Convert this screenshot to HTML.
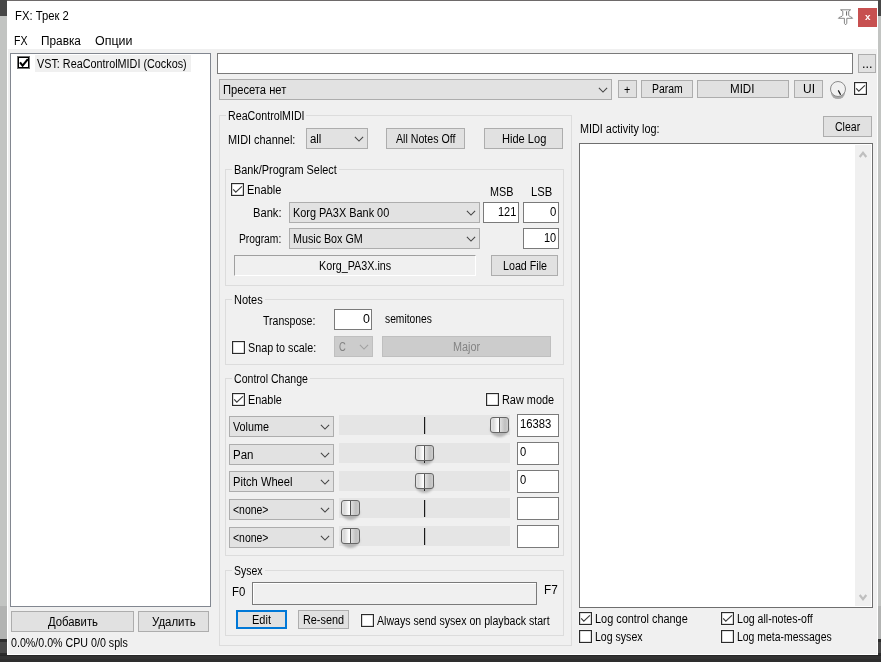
<!DOCTYPE html><html lang="ru"><head><meta charset="utf-8"><title>FX: Трек 2</title><style>
html,body{margin:0;padding:0;background:#2e2e2e;overflow:hidden;}
#r{position:relative;width:881px;height:662px;overflow:hidden;font-family:"Liberation Sans", sans-serif;font-size:12px;}
#r div,#r svg,#r span{position:absolute;}
#r span{white-space:nowrap;line-height:20px;height:20px;transform-origin:0 50%;}
</style></head><body><div id="r">
<div style="left:0px;top:0px;width:881px;height:662px;background:#2e2e2e;"></div>
<div style="left:0px;top:655px;width:881px;height:1px;background:#262626;"></div>
<div style="left:0px;top:656px;width:881px;height:3px;background:#333333;"></div>
<div style="left:0px;top:0px;width:7px;height:16px;background:#474747;"></div>
<div style="left:0px;top:16px;width:7px;height:590px;background:#c2c4c2;"></div>
<div style="left:0px;top:606px;width:7px;height:33px;background:#b2b3b2;"></div>
<div style="left:0px;top:639px;width:7px;height:3px;background:#2d2d2d;"></div>
<div style="left:0px;top:642px;width:7px;height:11px;background:#484848;"></div>
<div style="left:0px;top:653px;width:7px;height:2px;background:#2b2b2b;"></div>
<div style="left:878px;top:0px;width:3px;height:16px;background:#474747;"></div>
<div style="left:878px;top:16px;width:3px;height:590px;background:#c2c4c2;"></div>
<div style="left:878px;top:606px;width:3px;height:33px;background:#b2b3b2;"></div>
<div style="left:878px;top:639px;width:3px;height:3px;background:#2d2d2d;"></div>
<div style="left:878px;top:642px;width:3px;height:11px;background:#484848;"></div>
<div style="left:878px;top:653px;width:3px;height:2px;background:#2b2b2b;"></div>
<div style="left:7px;top:0px;width:871px;height:655px;background:#fff;"></div>
<div style="left:8px;top:0px;width:869px;height:654px;background:#f0f0f0;"></div>
<div style="left:8px;top:0px;width:869px;height:49px;background:#fff;"></div>
<div style="left:7px;top:0px;width:871px;height:1px;background:#6e6a6a;"></div>
<svg style="left:836px;top:7px" width="19" height="20" viewBox="0 0 19 20"><path d="M4.6,2.8 H14.6 L12.7,4.3 V8.3 C12.9,9.7 16.3,10 16.6,11.3 H10.8 V16.3 L9.6,17.8 L8.4,16.3 V11.3 H2.4 C2.7,10 6.6,9.7 6.8,8.3 V4.3 Z" fill="#fff" stroke="#707070" stroke-width="0.85" stroke-linejoin="round"/><line x1="10.6" y1="4.3" x2="10.6" y2="8.6" stroke="#555" stroke-width="0.9"/></svg>
<div style="left:858px;top:8px;width:19px;height:19px;background:#c75050;"></div>
<span style="left:864.7px;top:6.6px;color:#fff;font-weight:bold;font-size:9.5px;transform:scaleX(1.04);">x</span>
<div style="left:10px;top:53px;width:201px;height:554px;background:#fff;border:1px solid #828790;box-sizing:border-box;"></div>
<div style="left:35px;top:55px;width:156px;height:17px;background:#f0f0f0;"></div>
<div style="left:17px;top:56px;width:13px;height:13px;background:#fff;border:1px solid #707070;box-sizing:border-box;box-shadow:inset 0 0 0 1px #000;"></div>
<svg style="left:17px;top:56px" width="13" height="13" viewBox="0 0 13 13"><polyline points="3,6.4 5.6,9.6 10.9,3.1" fill="none" stroke="#000" stroke-width="2.1"/></svg>
<div style="left:11px;top:611px;width:123px;height:21px;background:#e1e1e1;border:1px solid #adadad;box-sizing:border-box;"></div>
<div style="left:138px;top:611px;width:71px;height:21px;background:#e1e1e1;border:1px solid #adadad;box-sizing:border-box;"></div>
<div style="left:217px;top:53px;width:636px;height:21px;background:#fff;border:1px solid #7a7a7a;box-sizing:border-box;"></div>
<div style="left:858px;top:54px;width:18px;height:19px;background:#e1e1e1;border:1px solid #adadad;box-sizing:border-box;"></div>
<div style="left:219px;top:79px;width:393px;height:21px;background:#e2e2e2;border:1px solid #adadad;box-sizing:border-box;"></div>
<svg style="left:598px;top:86.9px" width="10" height="6" viewBox="0 0 10 6"><polyline points="0.9,0.8 5,5 9.1,0.8" fill="none" stroke="#444" stroke-width="1.05"/></svg>
<div style="left:618px;top:80px;width:19px;height:18px;background:#e1e1e1;border:1px solid #adadad;box-sizing:border-box;"></div>
<div style="left:641px;top:80px;width:52px;height:18px;background:#e1e1e1;border:1px solid #adadad;box-sizing:border-box;"></div>
<div style="left:697px;top:80px;width:92px;height:18px;background:#e1e1e1;border:1px solid #adadad;box-sizing:border-box;"></div>
<div style="left:794px;top:80px;width:29px;height:18px;background:#e1e1e1;border:1px solid #adadad;box-sizing:border-box;"></div>
<div style="left:831px;top:86px;width:14px;height:12.6px;border-radius:50%;background:#a8a8a8;filter:blur(0.7px)"></div>
<div style="left:830px;top:80.8px;width:16px;height:16px;border-radius:50%;background:#f1f1f1;border:1px solid #8c8c8c;box-sizing:border-box"></div>
<svg style="left:830px;top:80.8px" width="16" height="16" viewBox="0 0 16 16"><line x1="8.3" y1="9.4" x2="10.6" y2="13.8" stroke="#111" stroke-width="1.2"/></svg>
<div style="left:854px;top:82px;width:13px;height:13px;background:#fff;border:1px solid #2b2b2b;box-sizing:border-box;box-shadow:0 0 0 0.5px rgba(255,255,255,.6),inset 0 0 0 0.3px #888;"></div>
<svg style="left:854px;top:82px" width="13" height="13" viewBox="0 0 13 13"><polyline points="2.2,6.3 4.8,9.2 10.9,3.3" fill="none" stroke="#3a3a3a" stroke-width="1.15"/></svg>
<div style="left:219px;top:115px;width:353px;height:531px;border:1px solid #dcdcdc;box-sizing:border-box;"></div>
<div style="left:226.25px;top:113px;width:79.75px;height:5px;background:#f0f0f0;"></div>
<div style="left:306px;top:128px;width:62px;height:21px;background:#e2e2e2;border:1px solid #adadad;box-sizing:border-box;"></div>
<svg style="left:354px;top:135.9px" width="10" height="6" viewBox="0 0 10 6"><polyline points="0.9,0.8 5,5 9.1,0.8" fill="none" stroke="#444" stroke-width="1.05"/></svg>
<div style="left:386px;top:128px;width:79px;height:21px;background:#e1e1e1;border:1px solid #adadad;box-sizing:border-box;"></div>
<div style="left:484px;top:128px;width:79px;height:21px;background:#e1e1e1;border:1px solid #adadad;box-sizing:border-box;"></div>
<div style="left:225px;top:169px;width:339px;height:117px;border:1px solid #dcdcdc;box-sizing:border-box;"></div>
<div style="left:232.1px;top:167px;width:106.9px;height:5px;background:#f0f0f0;"></div>
<div style="left:231px;top:183px;width:13px;height:13px;background:#fff;border:1px solid #2b2b2b;box-sizing:border-box;box-shadow:0 0 0 0.5px rgba(255,255,255,.6),inset 0 0 0 0.3px #888;"></div>
<svg style="left:231px;top:183px" width="13" height="13" viewBox="0 0 13 13"><polyline points="2.2,6.3 4.8,9.2 10.9,3.3" fill="none" stroke="#3a3a3a" stroke-width="1.15"/></svg>
<div style="left:289px;top:202px;width:191px;height:21px;background:#e2e2e2;border:1px solid #adadad;box-sizing:border-box;"></div>
<svg style="left:466px;top:209.9px" width="10" height="6" viewBox="0 0 10 6"><polyline points="0.9,0.8 5,5 9.1,0.8" fill="none" stroke="#444" stroke-width="1.05"/></svg>
<div style="left:483px;top:202px;width:36px;height:21px;background:#fff;border:1px solid #7a7a7a;box-sizing:border-box;"></div>
<div style="left:523px;top:202px;width:36px;height:21px;background:#fff;border:1px solid #7a7a7a;box-sizing:border-box;"></div>
<div style="left:289px;top:228px;width:191px;height:21px;background:#e2e2e2;border:1px solid #adadad;box-sizing:border-box;"></div>
<svg style="left:466px;top:235.9px" width="10" height="6" viewBox="0 0 10 6"><polyline points="0.9,0.8 5,5 9.1,0.8" fill="none" stroke="#444" stroke-width="1.05"/></svg>
<div style="left:523px;top:228px;width:36px;height:21px;background:#fff;border:1px solid #7a7a7a;box-sizing:border-box;"></div>
<div style="left:234px;top:255px;width:242px;height:21px;background:#f0f0f0;box-sizing:border-box;border-top:1px solid #a0a0a0;border-left:1px solid #a0a0a0;border-right:1px solid #fff;border-bottom:1px solid #fff;"></div>
<div style="left:491px;top:255px;width:67px;height:21px;background:#e1e1e1;border:1px solid #adadad;box-sizing:border-box;"></div>
<div style="left:225px;top:299px;width:339px;height:66px;border:1px solid #dcdcdc;box-sizing:border-box;"></div>
<div style="left:232.0px;top:297px;width:32.5px;height:5px;background:#f0f0f0;"></div>
<div style="left:334px;top:309px;width:38px;height:21px;background:#fff;border:1px solid #7a7a7a;box-sizing:border-box;"></div>
<div style="left:232px;top:341px;width:13px;height:13px;background:#fff;border:1px solid #2b2b2b;box-sizing:border-box;box-shadow:0 0 0 0.5px rgba(255,255,255,.6),inset 0 0 0 0.3px #888;"></div>
<div style="left:334px;top:336px;width:39px;height:21px;background:#cccccc;border:1px solid #bfbfbf;box-sizing:border-box;"></div>
<svg style="left:359px;top:343.9px" width="10" height="6" viewBox="0 0 10 6"><polyline points="0.9,0.8 5,5 9.1,0.8" fill="none" stroke="#a0a0a0" stroke-width="1.05"/></svg>
<div style="left:382px;top:336px;width:169px;height:21px;background:#cccccc;border:1px solid #bfbfbf;box-sizing:border-box;"></div>
<div style="left:225px;top:378px;width:339px;height:177.5px;border:1px solid #dcdcdc;box-sizing:border-box;"></div>
<div style="left:232.0px;top:376px;width:78.0px;height:5px;background:#f0f0f0;"></div>
<div style="left:232px;top:393px;width:13px;height:13px;background:#fff;border:1px solid #2b2b2b;box-sizing:border-box;box-shadow:0 0 0 0.5px rgba(255,255,255,.6),inset 0 0 0 0.3px #888;"></div>
<svg style="left:232px;top:393px" width="13" height="13" viewBox="0 0 13 13"><polyline points="2.2,6.3 4.8,9.2 10.9,3.3" fill="none" stroke="#3a3a3a" stroke-width="1.15"/></svg>
<div style="left:486px;top:393px;width:13px;height:13px;background:#fff;border:1px solid #2b2b2b;box-sizing:border-box;box-shadow:0 0 0 0.5px rgba(255,255,255,.6),inset 0 0 0 0.3px #888;"></div>
<div style="left:229px;top:416px;width:105px;height:21px;background:#e2e2e2;border:1px solid #adadad;box-sizing:border-box;"></div>
<svg style="left:320px;top:423.9px" width="10" height="6" viewBox="0 0 10 6"><polyline points="0.9,0.8 5,5 9.1,0.8" fill="none" stroke="#444" stroke-width="1.05"/></svg>
<div style="left:339px;top:415px;width:171px;height:20px;background:#e5e5e5;"></div>
<div style="left:424px;top:417px;width:1px;height:17px;background:#1a1a1a;box-shadow:0.4px 0 0 #888;"></div>
<div style="left:490px;top:428px;width:19px;height:9.3px;border-radius:0 0 50% 50% / 0 0 100% 100%;background:#b4b4b4;filter:blur(1.1px);"></div>
<div style="left:490px;top:417px;width:19px;height:16px;box-sizing:border-box;border:1px solid #666;border-radius:3px;background:linear-gradient(90deg,#e4e4e4 0%,#d9d9d9 14%,#ffffff 42%,#ffffff 50%,#dedede 55%,#c0c0c0 82%,#cdcdcd 100%);"></div>
<div style="left:499px;top:418px;width:1px;height:14px;background:#555;"></div>
<div style="left:517px;top:414px;width:42px;height:23px;background:#fff;border:1px solid #7a7a7a;box-sizing:border-box;"></div>
<div style="left:229px;top:444px;width:105px;height:21px;background:#e2e2e2;border:1px solid #adadad;box-sizing:border-box;"></div>
<svg style="left:320px;top:451.9px" width="10" height="6" viewBox="0 0 10 6"><polyline points="0.9,0.8 5,5 9.1,0.8" fill="none" stroke="#444" stroke-width="1.05"/></svg>
<div style="left:339px;top:443px;width:171px;height:20px;background:#e5e5e5;"></div>
<div style="left:424px;top:445px;width:1px;height:17px;background:#1a1a1a;box-shadow:0.4px 0 0 #888;"></div>
<div style="left:415px;top:456px;width:19px;height:9.3px;border-radius:0 0 50% 50% / 0 0 100% 100%;background:#b4b4b4;filter:blur(1.1px);"></div>
<div style="left:415px;top:445px;width:19px;height:16px;box-sizing:border-box;border:1px solid #666;border-radius:3px;background:linear-gradient(90deg,#e4e4e4 0%,#d9d9d9 14%,#ffffff 42%,#ffffff 50%,#dedede 55%,#c0c0c0 82%,#cdcdcd 100%);"></div>
<div style="left:424px;top:446px;width:1px;height:14px;background:#555;"></div>
<div style="left:424px;top:461px;width:1px;height:1.5px;background:#222;"></div>
<div style="left:517px;top:442px;width:42px;height:23px;background:#fff;border:1px solid #7a7a7a;box-sizing:border-box;"></div>
<div style="left:229px;top:471px;width:105px;height:21px;background:#e2e2e2;border:1px solid #adadad;box-sizing:border-box;"></div>
<svg style="left:320px;top:478.9px" width="10" height="6" viewBox="0 0 10 6"><polyline points="0.9,0.8 5,5 9.1,0.8" fill="none" stroke="#444" stroke-width="1.05"/></svg>
<div style="left:339px;top:471px;width:171px;height:20px;background:#e5e5e5;"></div>
<div style="left:424px;top:473px;width:1px;height:17px;background:#1a1a1a;box-shadow:0.4px 0 0 #888;"></div>
<div style="left:415px;top:484px;width:19px;height:9.3px;border-radius:0 0 50% 50% / 0 0 100% 100%;background:#b4b4b4;filter:blur(1.1px);"></div>
<div style="left:415px;top:473px;width:19px;height:16px;box-sizing:border-box;border:1px solid #666;border-radius:3px;background:linear-gradient(90deg,#e4e4e4 0%,#d9d9d9 14%,#ffffff 42%,#ffffff 50%,#dedede 55%,#c0c0c0 82%,#cdcdcd 100%);"></div>
<div style="left:424px;top:474px;width:1px;height:14px;background:#555;"></div>
<div style="left:424px;top:489px;width:1px;height:1.5px;background:#222;"></div>
<div style="left:517px;top:470px;width:42px;height:23px;background:#fff;border:1px solid #7a7a7a;box-sizing:border-box;"></div>
<div style="left:229px;top:499px;width:105px;height:21px;background:#e2e2e2;border:1px solid #adadad;box-sizing:border-box;"></div>
<svg style="left:320px;top:506.9px" width="10" height="6" viewBox="0 0 10 6"><polyline points="0.9,0.8 5,5 9.1,0.8" fill="none" stroke="#444" stroke-width="1.05"/></svg>
<div style="left:339px;top:498px;width:171px;height:20px;background:#e5e5e5;"></div>
<div style="left:424px;top:500px;width:1px;height:17px;background:#1a1a1a;box-shadow:0.4px 0 0 #888;"></div>
<div style="left:341px;top:511px;width:19px;height:9.3px;border-radius:0 0 50% 50% / 0 0 100% 100%;background:#b4b4b4;filter:blur(1.1px);"></div>
<div style="left:341px;top:500px;width:19px;height:16px;box-sizing:border-box;border:1px solid #666;border-radius:3px;background:linear-gradient(90deg,#e4e4e4 0%,#d9d9d9 14%,#ffffff 42%,#ffffff 50%,#dedede 55%,#c0c0c0 82%,#cdcdcd 100%);"></div>
<div style="left:350px;top:501px;width:1px;height:14px;background:#555;"></div>
<div style="left:517px;top:497px;width:42px;height:23px;background:#fff;border:1px solid #7a7a7a;box-sizing:border-box;"></div>
<div style="left:229px;top:527px;width:105px;height:21px;background:#e2e2e2;border:1px solid #adadad;box-sizing:border-box;"></div>
<svg style="left:320px;top:534.9px" width="10" height="6" viewBox="0 0 10 6"><polyline points="0.9,0.8 5,5 9.1,0.8" fill="none" stroke="#444" stroke-width="1.05"/></svg>
<div style="left:339px;top:526px;width:171px;height:20px;background:#e5e5e5;"></div>
<div style="left:424px;top:528px;width:1px;height:17px;background:#1a1a1a;box-shadow:0.4px 0 0 #888;"></div>
<div style="left:341px;top:539px;width:19px;height:9.3px;border-radius:0 0 50% 50% / 0 0 100% 100%;background:#b4b4b4;filter:blur(1.1px);"></div>
<div style="left:341px;top:528px;width:19px;height:16px;box-sizing:border-box;border:1px solid #666;border-radius:3px;background:linear-gradient(90deg,#e4e4e4 0%,#d9d9d9 14%,#ffffff 42%,#ffffff 50%,#dedede 55%,#c0c0c0 82%,#cdcdcd 100%);"></div>
<div style="left:350px;top:529px;width:1px;height:14px;background:#555;"></div>
<div style="left:517px;top:525px;width:42px;height:23px;background:#fff;border:1px solid #7a7a7a;box-sizing:border-box;"></div>
<div style="left:225px;top:570px;width:339px;height:66px;border:1px solid #dcdcdc;box-sizing:border-box;"></div>
<div style="left:232.0px;top:568px;width:33.0px;height:5px;background:#f0f0f0;"></div>
<div style="left:252px;top:582px;width:285px;height:23px;background:#f0f0f0;border:1px solid #7a7a7a;box-sizing:border-box;box-shadow:inset 1px 1px 0 #fff;"></div>
<div style="left:236px;top:610px;width:51px;height:19px;background:#e1e1e1;border:2px solid #0078d7;box-sizing:border-box;"></div>
<div style="left:298px;top:610px;width:51px;height:19px;background:#e1e1e1;border:1px solid #adadad;box-sizing:border-box;"></div>
<div style="left:361px;top:614px;width:13px;height:13px;background:#fff;border:1px solid #2b2b2b;box-sizing:border-box;box-shadow:0 0 0 0.5px rgba(255,255,255,.6),inset 0 0 0 0.3px #888;"></div>
<div style="left:823px;top:116px;width:49px;height:21px;background:#e1e1e1;border:1px solid #adadad;box-sizing:border-box;"></div>
<div style="left:579px;top:143px;width:294px;height:465px;background:#fff;border:1px solid #6e6e6e;box-sizing:border-box;"></div>
<div style="left:855px;top:145px;width:16px;height:461px;background:#f0f0f0;"></div>
<svg style="left:857.5px;top:149.5px" width="10" height="9" viewBox="0 0 10 9"><polyline points="1.7,7 5,2.8 8.3,7" fill="none" stroke="#bfbfbf" stroke-width="2.2"/></svg>
<svg style="left:857.5px;top:593px" width="10" height="9" viewBox="0 0 10 9"><polyline points="1.7,2 5,6.2 8.3,2" fill="none" stroke="#bfbfbf" stroke-width="2.2"/></svg>
<div style="left:579px;top:612px;width:13px;height:13px;background:#fff;border:1px solid #2b2b2b;box-sizing:border-box;box-shadow:0 0 0 0.5px rgba(255,255,255,.6),inset 0 0 0 0.3px #888;"></div>
<svg style="left:579px;top:612px" width="13" height="13" viewBox="0 0 13 13"><polyline points="2.2,6.3 4.8,9.2 10.9,3.3" fill="none" stroke="#3a3a3a" stroke-width="1.15"/></svg>
<div style="left:579px;top:630px;width:13px;height:13px;background:#fff;border:1px solid #2b2b2b;box-sizing:border-box;box-shadow:0 0 0 0.5px rgba(255,255,255,.6),inset 0 0 0 0.3px #888;"></div>
<div style="left:721px;top:612px;width:13px;height:13px;background:#fff;border:1px solid #2b2b2b;box-sizing:border-box;box-shadow:0 0 0 0.5px rgba(255,255,255,.6),inset 0 0 0 0.3px #888;"></div>
<svg style="left:721px;top:612px" width="13" height="13" viewBox="0 0 13 13"><polyline points="2.2,6.3 4.8,9.2 10.9,3.3" fill="none" stroke="#3a3a3a" stroke-width="1.15"/></svg>
<div style="left:721px;top:630px;width:13px;height:13px;background:#fff;border:1px solid #2b2b2b;box-sizing:border-box;box-shadow:0 0 0 0.5px rgba(255,255,255,.6),inset 0 0 0 0.3px #888;"></div>
<span style="left:14.81px;top:5.84px;color:#000;transform:scaleX(0.9383);">FX: Трек 2</span>
<span style="left:14.16px;top:30.59px;color:#000;transform:scaleX(0.8815);">FX</span>
<span style="left:40.56px;top:30.59px;color:#000;transform:scaleX(0.9846);">Правка</span>
<span style="left:94.93px;top:30.59px;color:#000;transform:scaleX(1.0357);">Опции</span>
<span style="left:36.95px;top:53.84px;color:#000;transform:scaleX(0.9014);">VST: ReaControlMIDI (Cockos)</span>
<span style="left:47.95px;top:611.84px;color:#000;transform:scaleX(0.9423);">Добавить</span>
<span style="left:151.71px;top:611.84px;color:#000;transform:scaleX(0.9542);">Удалить</span>
<span style="left:10.60px;top:632.54px;color:#000;transform:scaleX(0.8886);">0.0%/0.0% CPU 0/0 spls</span>
<span style="left:861.59px;top:53.84px;color:#000;transform:scaleX(1.0549);">...</span>
<span style="left:222.92px;top:79.84px;color:#000;transform:scaleX(0.9302);">Пресета нет</span>
<span style="left:624.41px;top:79.84px;color:#000;transform:scaleX(0.8983);">+</span>
<span style="left:651.77px;top:78.84px;color:#000;transform:scaleX(0.8708);">Param</span>
<span style="left:730.38px;top:78.84px;color:#000;transform:scaleX(0.9658);">MIDI</span>
<span style="left:802.60px;top:78.84px;color:#000;transform:scaleX(0.9984);">UI</span>
<span style="left:227.90px;top:105.64px;color:#000;transform:scaleX(0.8900);">ReaControlMIDI</span>
<span style="left:228.14px;top:129.64px;color:#000;transform:scaleX(0.9097);">MIDI channel:</span>
<span style="left:309.83px;top:128.64px;color:#000;transform:scaleX(0.9497);">all</span>
<span style="left:395.90px;top:128.84px;color:#000;transform:scaleX(0.8854);">All Notes Off</span>
<span style="left:501.72px;top:128.84px;color:#000;transform:scaleX(0.9232);">Hide Log</span>
<span style="left:233.74px;top:159.54px;color:#000;transform:scaleX(0.9070);">Bank/Program Select</span>
<span style="left:246.63px;top:179.84px;color:#000;transform:scaleX(0.9194);">Enable</span>
<span style="left:489.65px;top:182.09px;color:#000;transform:scaleX(0.8998);">MSB</span>
<span style="left:531.11px;top:182.09px;color:#000;transform:scaleX(0.9348);">LSB</span>
<span style="left:252.72px;top:202.84px;color:#000;transform:scaleX(0.9284);">Bank:</span>
<span style="left:292.64px;top:202.84px;color:#000;transform:scaleX(0.9094);">Korg PA3X Bank 00</span>
<span style="left:497.68px;top:201.84px;color:#000;transform:scaleX(0.9166);">121</span>
<span style="left:550.07px;top:201.84px;color:#000;transform:scaleX(0.9483);">0</span>
<span style="left:238.89px;top:229.34px;color:#000;transform:scaleX(0.8560);">Program:</span>
<span style="left:292.65px;top:229.34px;color:#000;transform:scaleX(0.8934);">Music Box GM</span>
<span style="left:544.18px;top:228.14px;color:#000;transform:scaleX(0.9149);">10</span>
<span style="left:318.65px;top:255.84px;color:#000;transform:scaleX(0.8971);">Korg_PA3X.ins</span>
<span style="left:502.75px;top:255.84px;color:#000;transform:scaleX(0.8916);">Load File</span>
<span style="left:233.63px;top:289.84px;color:#000;transform:scaleX(0.9167);">Notes</span>
<span style="left:263.03px;top:310.84px;color:#000;transform:scaleX(0.8798);">Transpose:</span>
<span style="left:363.03px;top:308.84px;color:#000;transform:scaleX(1.0345);">0</span>
<span style="left:384.74px;top:308.84px;color:#000;transform:scaleX(0.8566);">semitones</span>
<span style="left:248.30px;top:337.84px;color:#000;transform:scaleX(0.8964);">Snap to scale:</span>
<span style="left:339.03px;top:336.84px;color:#838383;transform:scaleX(0.7843);">C</span>
<span style="left:452.64px;top:336.84px;color:#838383;transform:scaleX(0.9009);">Major</span>
<span style="left:233.97px;top:368.84px;color:#000;transform:scaleX(0.8803);">Control Change</span>
<span style="left:247.89px;top:389.84px;color:#000;transform:scaleX(0.9055);">Enable</span>
<span style="left:501.64px;top:389.84px;color:#000;transform:scaleX(0.9081);">Raw mode</span>
<span style="left:232.96px;top:416.54px;color:#000;transform:scaleX(0.8998);">Volume</span>
<span style="left:520.15px;top:413.64px;color:#000;transform:scaleX(0.9391);">16383</span>
<span style="left:232.79px;top:444.54px;color:#000;transform:scaleX(0.9578);">Pan</span>
<span style="left:520.38px;top:441.64px;color:#000;transform:scaleX(0.9310);">0</span>
<span style="left:232.62px;top:471.54px;color:#000;transform:scaleX(0.9292);">Pitch Wheel</span>
<span style="left:520.38px;top:469.64px;color:#000;transform:scaleX(0.9310);">0</span>
<span style="left:233.42px;top:499.54px;color:#000;transform:scaleX(0.8711);">&lt;none&gt;</span>
<span style="left:233.42px;top:527.54px;color:#000;transform:scaleX(0.8711);">&lt;none&gt;</span>
<span style="left:234.06px;top:560.84px;color:#000;transform:scaleX(0.8729);">Sysex</span>
<span style="left:231.60px;top:581.84px;color:#000;transform:scaleX(0.9501);">F0</span>
<span style="left:543.57px;top:579.84px;color:#000;transform:scaleX(0.9816);">F7</span>
<span style="left:251.63px;top:609.84px;color:#000;transform:scaleX(0.9163);">Edit</span>
<span style="left:303.14px;top:609.84px;color:#000;transform:scaleX(0.9042);">Re-send</span>
<span style="left:377.00px;top:610.84px;color:#000;transform:scaleX(0.8831);">Always send sysex on playback start</span>
<span style="left:579.74px;top:118.64px;color:#000;transform:scaleX(0.9025);">MIDI activity log:</span>
<span style="left:834.97px;top:116.84px;color:#000;transform:scaleX(0.8788);">Clear</span>
<span style="left:594.94px;top:608.84px;color:#000;transform:scaleX(0.9085);">Log control change</span>
<span style="left:594.96px;top:627.34px;color:#000;transform:scaleX(0.8796);">Log sysex</span>
<span style="left:736.86px;top:608.84px;color:#000;transform:scaleX(0.8805);">Log all-notes-off</span>
<span style="left:736.87px;top:627.34px;color:#000;transform:scaleX(0.8708);">Log meta-messages</span>
</div></body></html>
